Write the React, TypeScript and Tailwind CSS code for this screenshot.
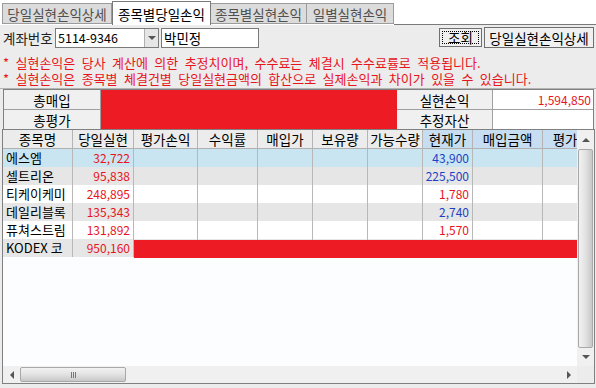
import React from 'react';

interface Row {
  name: string;
  pnl: string;
  price: string;
  priceUp: boolean;
  bg: string;
}

const rows: Row[] = [
  { name: '에스엠', pnl: '32,722', price: '43,900', priceUp: false, bg: 'bg-[#c9e5f1]' },
  { name: '셀트리온', pnl: '95,838', price: '225,500', priceUp: false, bg: 'bg-[#e6e6e6]' },
  { name: '티케이케미', pnl: '248,895', price: '1,780', priceUp: true, bg: 'bg-white' },
  { name: '데일리블록', pnl: '135,343', price: '2,740', priceUp: false, bg: 'bg-[#e6e6e6]' },
  { name: '퓨쳐스트림', pnl: '131,892', price: '1,570', priceUp: true, bg: 'bg-white' },
  { name: 'KODEX 코', pnl: '950,160', price: '', priceUp: true, bg: 'bg-[#e6e6e6]' },
];

// column widths incl. right border
const cols = [
  { label: '종목명', w: 'w-[70px]', blue: false },
  { label: '당일실현', w: 'w-[61px]', blue: false },
  { label: '평가손익', w: 'w-[64px]', blue: false },
  { label: '수익률', w: 'w-[60px]', blue: false },
  { label: '매입가', w: 'w-[55px]', blue: false },
  { label: '보유량', w: 'w-[55px]', blue: false },
  { label: '가능수량', w: 'w-[55px]', blue: false },
  { label: '현재가', w: 'w-[50px]', blue: true },
  { label: '매입금액', w: 'w-[70px]', blue: true },
  { label: '평가금액', w: 'w-[70px]', blue: true },
];

const Tri = ({ dir }: { dir: 'up' | 'down' | 'left' | 'right' }) => {
  const pts = {
    up: '0,4 4,0 8,4',
    down: '0,0 8,0 4,4',
    left: '4,0 4,8 0,4',
    right: '0,0 0,8 4,4',
  }[dir];
  const w = dir === 'up' || dir === 'down' ? 8 : 4;
  const h = dir === 'up' || dir === 'down' ? 4 : 8;
  return (
    <svg width={w} height={h} viewBox={`0 0 ${w} ${h}`}>
      <polygon points={pts} fill="#555" />
    </svg>
  );
};

const App = () => {
  return (
    <div className="w-[596px] h-[388px] bg-[#ececec] overflow-hidden font-['Noto_Sans_CJK_KR',sans-serif] text-[12px] leading-[16px] text-black">
      {/* 탭 */}
      <div className="h-[25px] bg-white flex items-end pl-[2px]">
        <div className="w-[110px] h-[21px] mb-px border border-[#9c9c9c] bg-[#dcdcdc] text-[#505050] flex items-center justify-center text-[13.5px]">
          당일실현손익상세
        </div>
        <div className="w-[99px] h-[24px] border border-b-0 border-[#7a7a7a] bg-white flex items-center justify-center text-[13.5px]">
          종목별당일손익
        </div>
        <div className="w-[96px] h-[21px] mb-px border border-l-0 border-[#9c9c9c] bg-[#dcdcdc] text-[#505050] flex items-center justify-center text-[13.5px]">
          종목별실현손익
        </div>
        <div className="w-[87px] h-[21px] mb-px border border-l-0 border-[#9c9c9c] bg-[#dcdcdc] text-[#505050] flex items-center justify-center text-[13.5px]">
          일별실현손익
        </div>
        <div className="flex-1 border-b border-[#7a7a7a]" />
      </div>

      {/* 조회 영역 */}
      <div className="px-[3px] pt-[2px]">
        <div className="flex items-center h-[21px]">
          <span className="w-[52px] text-[13.5px] text-[#222]">계좌번호</span>
          <div className="w-[104px] h-[20px] border border-[#7a7a7a] bg-white flex items-center">
            <span className="flex-1 pl-[2px] text-[12.5px]">5114-9346</span>
            <div className="w-[14px] h-full bg-[#e6e6e6] border-l border-[#b0b0b0] flex items-center justify-center">
              <Tri dir="down" />
            </div>
          </div>
          <div className="ml-[2px] w-[98px] h-[20px] border border-[#7a7a7a] bg-white flex items-center pl-[2px] text-[13.5px]">
            박민정
          </div>
          <div className="flex-1" />
          <div className="w-[43px] h-[19px] border border-[#707070] bg-[#f0f0f0] p-[2px]">
            <div className="w-full h-full border border-dotted border-black flex items-center justify-center text-[13.5px] leading-[13px]">
              조회
            </div>
          </div>
          <div className="ml-[2px] mr-[-1px] w-[110px] h-[21px] border border-[#707070] bg-[#f0f0f0] flex items-center justify-center text-[13.5px]">
            당일실현손익상세
          </div>
        </div>
        <div className="mt-[7px] text-[#e8141c] text-[13px] leading-[14px] [word-spacing:3.5px]">
          <div className="h-[16px] flex items-center">* 실현손익은 당사 계산에 의한 추정치이며, 수수료는 체결시 수수료률로 적용됩니다.</div>
          <div className="h-[16px] flex items-center">* 실현손익은 종목별 체결건별 당일실현금액의 합산으로 실제손익과 차이가 있을 수 있습니다.</div>
        </div>
      </div>

      <div className="mt-px border-t border-[#b4b4b4]" />

      {/* 합계 */}
      <div className="ml-[3px] w-[591px] h-[40px] border border-b-0 border-[#808080] flex bg-white">
        <div className="w-[97px] flex flex-col border-r border-[#a0a0a0]">
          <div className="h-[20px] bg-[#f0f0f0] border-b border-[#a0a0a0] flex items-center justify-center text-[13.5px]">총매입</div>
          <div className="flex-1 bg-[#f0f0f0] flex items-center justify-center text-[13.5px]">총평가</div>
        </div>
        <div className="w-[296px] bg-[#ed1c24]" />
        <div className="w-[96px] flex flex-col border-r border-[#a0a0a0]">
          <div className="h-[20px] bg-[#f0f0f0] border-b border-[#a0a0a0] flex items-center justify-center text-[13.5px]">실현손익</div>
          <div className="flex-1 bg-[#f0f0f0] flex items-center justify-center text-[13.5px]">추정자산</div>
        </div>
        <div className="flex-1 flex flex-col">
          <div className="h-[20px] border-b border-[#a0a0a0] flex items-center justify-end pr-[2px] text-[#e8141c]">1,594,850</div>
          <div className="flex-1" />
        </div>
      </div>

      {/* 그리드 */}
      <div className="ml-[2px] w-[593px] h-[255px] border border-[#808080] bg-[#fcfdff] flex flex-col">
        <div className="flex flex-1 min-h-0">
          <div className="relative w-[574px] overflow-hidden">
            <div className="flex h-[19px] border-b border-[#b0b0b0] w-max">
              {cols.map((c) => (
                <div
                  key={c.label}
                  className={`${c.w} shrink-0 border-r border-[#b4b4b4] flex items-center justify-center text-[13.5px] ${c.blue ? 'bg-[#c7ddf1]' : 'bg-[#ececec]'}`}
                >
                  {c.label}
                </div>
              ))}
            </div>
            {rows.map((r, i) => (
              <div key={r.name} className={`relative flex h-[18px] w-max ${r.bg}`}>
                {cols.map((c, j) => {
                  let content: React.ReactNode = null;
                  let cls = 'justify-end pr-[3px]';
                  if (j === 0) {
                    content = r.name;
                    cls = 'justify-start pl-[3px] text-[13px]';
                  } else if (j === 1) {
                    content = <span className="text-[#e8141c]">{r.pnl}</span>;
                  } else if (j === 7) {
                    content = <span className={r.priceUp ? 'text-[#e8141c]' : 'text-[#1d3fc4]'}>{r.price}</span>;
                  }
                  return (
                    <div key={c.label} className={`${c.w} shrink-0 border-r border-[#b8b8b8] flex items-center ${cls}`}>
                      {content}
                    </div>
                  );
                })}
                {i === rows.length - 1 && (
                  <div className="absolute left-[131px] top-px w-[470px] h-[18px] bg-[#ed1c24]" />
                )}
              </div>
            ))}
          </div>
          {/* 세로 스크롤 */}
          <div className="w-[17px] bg-[#f0f0f0] flex flex-col items-center">
            <div className="h-[19px] w-full flex items-center justify-center">
              <Tri dir="up" />
            </div>
            <div className="w-[15px] h-[199px] rounded-[2px] border border-[#a8a8a8] bg-gradient-to-r from-[#f2f2f2] via-[#e2e2e2] to-[#c8c8c8]" />
            <div className="flex-1 w-full flex items-center justify-center">
              <Tri dir="down" />
            </div>
          </div>
        </div>
        {/* 가로 스크롤 */}
        <div className="h-[17px] flex bg-[#f0f0f0]">
          <div className="w-[574px] flex items-center">
            <div className="w-[17px] flex items-center justify-center">
              <Tri dir="left" />
            </div>
            <div className="w-[106px] h-[15px] rounded-[2px] border border-[#a8a8a8] bg-gradient-to-b from-[#f2f2f2] via-[#e2e2e2] to-[#c8c8c8] flex items-center justify-center gap-[1px]">
              <div className="w-px h-[6px] bg-[#777]" />
              <div className="w-px h-[6px] bg-[#777]" />
              <div className="w-px h-[6px] bg-[#777]" />
            </div>
            <div className="flex-1" />
            <div className="w-[17px] flex items-center justify-center">
              <Tri dir="right" />
            </div>
          </div>
          <div className="w-[17px] bg-[#ececec]" />
        </div>
      </div>
    </div>
  );
};

export default App;
